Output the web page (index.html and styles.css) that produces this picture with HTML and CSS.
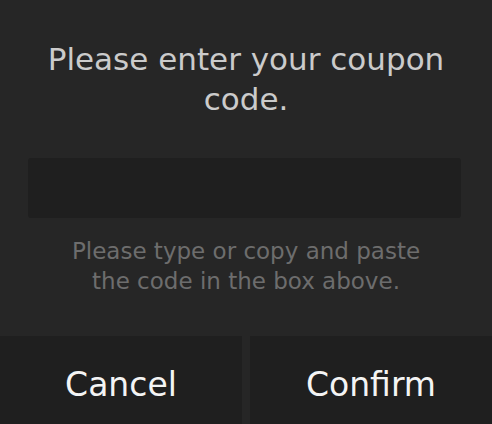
FILE: index.html
```html
<!DOCTYPE html>
<html>
<head>
<meta charset="utf-8">
<link rel="stylesheet" href="styles.css">
</head>
<body>
<div class="dialog">
  <div class="content">
    <h1 class="title">Please enter your coupon code.</h1>
    <input class="code-input" type="text" aria-label="Coupon code">
    <p class="hint">Please type or copy and paste the code in the box above.</p>
  </div>
  <div class="actions">
    <button class="btn">Cancel</button>
    <button class="btn">Confirm</button>
  </div>
</div>
</body>
</html>
```

FILE: styles.css
```css
html, body {
  margin: 0;
  padding: 0;
  background: #262626;
}
body {
  width: 492px;
  height: 424px;
  overflow: hidden;
  font-family: "DejaVu Sans", "Noto Sans", sans-serif;
}
.dialog {
  display: flex;
  flex-direction: column;
  height: 424px;
  background: #262626;
}
.content {
  display: flex;
  flex-direction: column;
  align-items: center;
  padding: 39px 0 0;
  flex: 1;
}
.title {
  margin: 0;
  font-weight: 400;
  font-size: 31px;
  line-height: 40px;
  color: #cbcbcb;
  text-align: center;
  width: 440px;
}
.code-input {
  box-sizing: border-box;
  margin: 39px 0 0 28px;
  width: 433px;
  height: 60px;
  border: none;
  border-radius: 3px;
  background: #1f1f1f;
  outline: none;
  align-self: flex-start;
}
.hint {
  margin: 18px 0 0;
  font-size: 23px;
  line-height: 30px;
  color: #6d6d6d;
  text-align: center;
  width: 370px;
}
.actions {
  display: flex;
  gap: 8px;
  height: 88px;
}
.btn {
  flex: 1;
  border: none;
  background: #1f1f1f;
  color: #f4f4f4;
  font-family: "DejaVu Sans", "Noto Sans", sans-serif;
  font-size: 33px;
  padding: 8px 0 0;
}
```
